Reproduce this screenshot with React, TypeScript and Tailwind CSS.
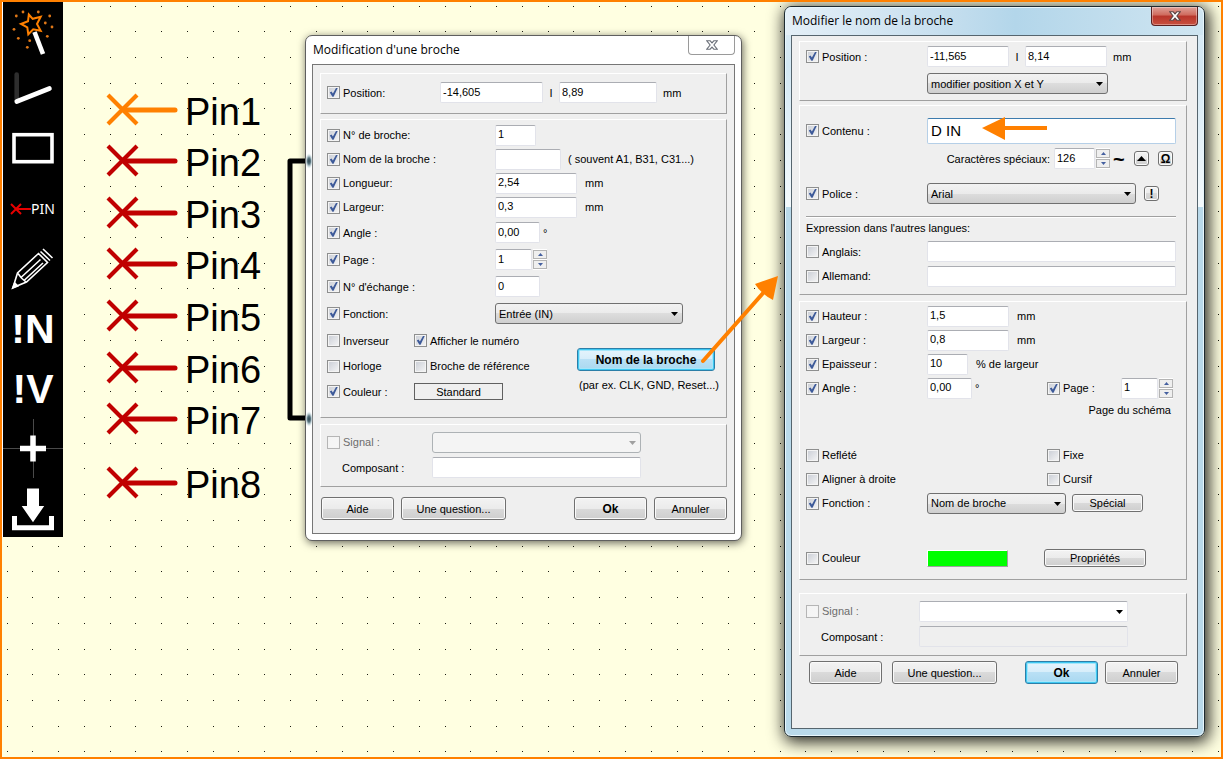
import type { ReactNode } from "react";
import clsx from "clsx";

const GRID_STEP_X = 25.77;
const GRID_STEP_Y = 25.72;
const GRID_COLS = 100;
const GRID_ROWS = 60;

interface Pin {
  name: string;
  y: number;
  selected?: boolean;
}

const PINS: Pin[] = [
  { name: "Pin1", y: 110, selected: true },
  { name: "Pin2", y: 161 },
  { name: "Pin3", y: 213 },
  { name: "Pin4", y: 264 },
  { name: "Pin5", y: 316 },
  { name: "Pin6", y: 368 },
  { name: "Pin7", y: 419 },
  { name: "Pin8", y: 483 },
];

const gridPath = () => {
  let d = "";
  for (let row = 0; row < GRID_ROWS; row++) {
    for (let col = 0; col < GRID_COLS; col++) {
      const x = Math.floor(7 + col * GRID_STEP_X);
      const y = Math.floor(6 + row * GRID_STEP_Y);
      d += `M${x} ${y}h1v1h-1z`;
    }
  }
  return d;
};

/* ---------- Controls ---------- */

interface CheckProps {
  label: string;
  checked?: boolean;
  disabled?: boolean;
  className?: string;
}

function Check({ label, checked = false, disabled = false, className }: CheckProps) {
  return (
    <label
      className={clsx(
        "flex shrink-0 items-center gap-[3px] whitespace-nowrap",
        disabled ? "text-[#6d6d6d]" : "text-black",
        className
      )}
    >
      <span className="relative size-[13px] shrink-0">
        <input
          type="checkbox"
          defaultChecked={checked}
          disabled={disabled}
          className="peer block size-[13px] appearance-none border border-[#8e8f8f] bg-linear-to-br from-[#c9cdd5] to-[#f6f6f6] shadow-[inset_0_0_0_1px_#f4f4f4] disabled:border-[#b5b5b5] disabled:from-[#f4f4f4]"
        />
        <svg
          viewBox="0 0 13 13"
          className="pointer-events-none invisible absolute inset-0 size-[13px] peer-checked:visible"
        >
          <path d="M2.8 6.4l1.7-1 1.4 2L9 2h1.7L6.6 10.8H5.4z" fill="#3d5a99" />
        </svg>
      </span>
      {label}
    </label>
  );
}

interface FieldProps {
  label: string;
  value?: string;
  disabled?: boolean;
  className?: string;
}

function Field({ label, value = "", disabled = false, className }: FieldProps) {
  return (
    <input
      type="text"
      aria-label={label}
      defaultValue={value}
      disabled={disabled}
      className={clsx(
        "h-[21px] shrink-0 rounded-[2px] border border-[#e2e3ea] border-t-[#abadb3] px-[2px] pb-[2px] text-[11px] text-black outline-none",
        disabled ? "bg-[#efefef]" : "bg-white",
        className
      )}
    />
  );
}

interface DropDownProps extends FieldProps {
  flat?: boolean;
}

function DropDown({ label, value = "", disabled = false, flat = false, className }: DropDownProps) {
  return (
    <span className={clsx("relative h-[21px] shrink-0", className)}>
      <select
        aria-label={label}
        defaultValue={value}
        disabled={disabled}
        className={clsx(
          "block h-full w-full appearance-none border pl-[3px] text-[11px] text-black",
          flat && "rounded-[2px] border-[#e2e3ea] border-t-[#abadb3] bg-white",
          !flat && disabled && "rounded-[3px] border-[#adb2b5] bg-[#f4f4f4]",
          !flat &&
            !disabled &&
            "rounded-[3px] border-[#707070] bg-[linear-gradient(#f2f2f2,#ebebeb_50%,#dddddd_50%,#cfcfcf)]"
        )}
      >
        <option>{value}</option>
      </select>
      <svg
        viewBox="0 0 7 4"
        className={clsx(
          "pointer-events-none absolute top-[9px] right-[5px] h-[4px] w-[7px]",
          disabled ? "fill-[#a0a0a0]" : "fill-black"
        )}
      >
        <path d="M0 0h7L3.5 4z" />
      </svg>
    </span>
  );
}

function Spinner({ label }: { label: string }) {
  return (
    <span className="ml-px flex h-[21px] w-[14px] shrink-0 flex-col gap-px bg-white py-px">
      <button
        aria-label={`${label} +`}
        className="flex flex-1 items-center justify-center border border-[#b4b4b4] bg-[#efefef]"
      >
        <svg viewBox="0 0 5 3" className="h-[3px] w-[5px] fill-[#4560a0]">
          <path d="M0 3h5L2.5 0z" />
        </svg>
      </button>
      <button
        aria-label={`${label} -`}
        className="flex flex-1 items-center justify-center border border-[#b4b4b4] bg-[#efefef]"
      >
        <svg viewBox="0 0 5 3" className="h-[3px] w-[5px] fill-[#4560a0]">
          <path d="M0 0h5L2.5 3z" />
        </svg>
      </button>
    </span>
  );
}

interface PushButtonProps {
  children: ReactNode;
  active?: boolean;
  className?: string;
}

function PushButton({ children, active = false, className }: PushButtonProps) {
  return (
    <button
      className={clsx(
        "flex shrink-0 items-center justify-center rounded-[3px] border whitespace-nowrap text-black",
        active
          ? "border-[#2c7fa8] bg-[linear-gradient(#e6f4fc,#d6edfa_50%,#b9e0f5_50%,#a9d8f0)] shadow-[inset_0_0_0_1px_#3fc8f2,inset_0_0_0_2px_#a5e6fa]"
          : "border-[#707070] bg-[linear-gradient(#f3f3f3,#ebebeb_50%,#dadada_50%,#cecece)] shadow-[inset_0_0_0_1px_#fafafa]",
        className
      )}
    >
      {children}
    </button>
  );
}

function Group({ children, className }: { children: ReactNode; className?: string }) {
  return (
    <fieldset
      className={clsx(
        "border border-t-white border-r-[#a0a0a0] border-b-[#a0a0a0] border-l-white pl-[6px]",
        className
      )}
    >
      {children}
    </fieldset>
  );
}

function Row({ children, tall = false, className }: { children: ReactNode; tall?: boolean; className?: string }) {
  return (
    <div className={clsx("flex items-center whitespace-nowrap", tall ? "h-[27px]" : "h-[24px]", className)}>
      {children}
    </div>
  );
}

function CloseGlyph({ className }: { className?: string }) {
  return (
    <svg viewBox="0 0 12 10" className={clsx("h-[10px] w-[12px]", className)}>
      <path
        d="M.8.8h3.4L6 2.9 7.8.8h3.4L7.9 5l3.3 4.2H7.8L6 7.100 4.2 9.2H.8L4.1 5z"
        strokeWidth="1.1"
      />
    </svg>
  );
}

/* ---------- Toolbar ---------- */

const SPARKS = [
  [13.3, 14], [20, 10], [35.3, 10], [46.7, 14], [42.3, 21], [49, 25],
  [11, 27.3], [15.3, 36.3], [26.7, 38.7], [44.3, 34.3], [24.3, 45.3],
];

function Toolbar() {
  return (
    <nav
      aria-label="Outils"
      className="absolute top-[2px] left-[2px] flex w-[61px] flex-col border-l border-white bg-black text-white"
    >
      <button aria-label="Assistant" className="h-[57px]">
        <svg viewBox="0 0 60 57" className="h-[57px] w-[60px]">
          <path d="M31.5 30L40 52" stroke="#fff" strokeWidth="4.6" />
          <path
            d="M25.8 12.5l3.9 4.3 8-2-3.7 7.2 3.7 6.8-7.5-1.5-4.9 5-1-7-6.3-3.3 7-2.7z"
            fill="#000"
            stroke="#ff8000"
            strokeWidth="2"
          />
          {SPARKS.map(([cx, cy]) => (
            <circle key={`${cx}-${cy}`} cx={cx} cy={cy} r="1.4" fill="#e07818" />
          ))}
        </svg>
      </button>
      <button aria-label="Ligne" className="h-[60px]">
        <svg viewBox="0 0 60 60" className="size-[60px]" strokeWidth="4.6" strokeLinecap="round">
          <path d="M13.7 15.5V40" stroke="#2e2e2e" />
          <path d="M13.7 42.5L46.5 29.5" stroke="#fff" />
        </svg>
      </button>
      <button aria-label="Rectangle" className="h-[60px]">
        <svg viewBox="0 0 60 60" className="size-[60px]">
          <rect x="11" y="15.7" width="38" height="27" fill="none" stroke="#fff" strokeWidth="3.6" />
        </svg>
      </button>
      <button className="flex h-[60px] items-center pl-[7px] font-['Noto_Sans',sans-serif] text-[14px]">
        <svg viewBox="0 0 21 12" className="h-[12px] w-[21px]" stroke="#e60000" strokeWidth="2">
          <path d="M1 1l10 10M1 11L11 1M6 6h15" />
        </svg>
        PIN
      </button>
      <button aria-label="Dessin" className="h-[60px]">
        <svg viewBox="0 0 60 60" className="size-[60px]" fill="none" stroke="#fff" strokeWidth="1.6">
          <path d="M10 48.500L14.500 34 35.500 14.500 44.500 23.500 23.500 43z" />
          <path d="M18 38.500L37.500 20.500M15 34.500l3 4 1 1 4 3.500M21 41.500L40 24M37.500 12.500L47 21.500M40 10l9.500 9" />
          <path d="M9.700 49l2-5 3 3z" fill="#fff" />
        </svg>
      </button>
      <button className="h-[60px] font-['Liberation_Sans',sans-serif] text-[41px] leading-[60px] font-bold">!N</button>
      <button className="h-[60px] font-['Liberation_Sans',sans-serif] text-[41px] leading-[60px] font-bold">!V</button>
      <button aria-label="Origine" className="h-[60px]">
        <svg viewBox="0 0 60 60" className="size-[60px]">
          <path d="M0 29.5h60M30.5 0v59" stroke="#4a4a4a" />
          <path d="M17 29.5h26M30 16.5v26" stroke="#fff" strokeWidth="5.5" />
        </svg>
      </button>
      <button aria-label="Importer" className="h-[58px]">
        <svg viewBox="0 0 60 58" className="h-[58px] w-[60px]" fill="#fff">
          <path d="M24 9.5h12V27h5.2L30 43.3 18.7 27H24z" />
          <path d="M9 37h5v9.2h32V37h5v14.3H9z" />
        </svg>
      </button>
    </nav>
  );
}

/* ---------- Schematic ---------- */

function Schematic() {
  return (
    <svg className="absolute inset-0 h-full w-full" aria-label="Schéma">
      <path d={gridPath()} fill="#1a1a10" shapeRendering="crispEdges" />
      {PINS.map((pin) => (
        <g key={pin.name} transform={`translate(123 ${pin.y})`}>
          <path
            d="M-15-15L14 14M-15 14L14-15"
            stroke={pin.selected ? "#ff8000" : "#c00000"}
            strokeWidth="4.2"
          />
          <path
            d="M2 0h50"
            stroke={pin.selected ? "#ff8000" : "#c00000"}
            strokeWidth="5"
            strokeLinecap="round"
          />
          <text x="62" y="15" className="fill-black font-['Liberation_Sans',sans-serif] text-[38px]">
            {pin.name}
          </text>
        </g>
      ))}
      <path d="M310 161H290V418H310" fill="none" stroke="#000" strokeWidth="5" strokeLinejoin="round" />
    </svg>
  );
}

/* Orange arrows and the wire ends seen through the window frame */
function Annotations() {
  return (
    <svg className="pointer-events-none absolute inset-0 h-full w-full">
      <defs>
        <radialGradient id="wireEnd">
          <stop offset="0" stopColor="#2e444e" />
          <stop offset="0.4" stopColor="#5d7883" />
          <stop offset="1" stopColor="#d8f0f5" stopOpacity="0" />
        </radialGradient>
      </defs>
      <ellipse cx="309" cy="161" rx="4" ry="8" fill="url(#wireEnd)" />
      <ellipse cx="309" cy="419" rx="4" ry="8" fill="url(#wireEnd)" />
      <path d="M703 361L764 292" stroke="#ff8000" strokeWidth="4" strokeLinecap="round" />
      <path d="M778 276L755 284q6 10 18 16z" fill="#ff8000" />
      <path d="M1004 128h43" stroke="#ff8000" strokeWidth="4" />
      <path d="M982 128l23-11v23z" fill="#ff8000" />
    </svg>
  );
}

/* ---------- Dialogs ---------- */

function SignalGroup({ flat = false, className, labelClass }: { flat?: boolean; className: string; labelClass: string }) {
  return (
    <Group className={clsx("py-[5px]", className)}>
      <Row>
        <Check label="Signal :" disabled className={labelClass} />
        <DropDown label="Signal" disabled={!flat} flat={flat} className="w-[209px]" />
      </Row>
      <Row tall>
        <span className={clsx("shrink-0 pl-[15px]", labelClass)}>Composant :</span>
        <Field label="Composant" disabled={flat} className="w-[209px]" />
      </Row>
    </Group>
  );
}

function PinDialog() {
  return (
    <section
      role="dialog"
      aria-labelledby="pin-title"
      className="absolute top-[35px] left-[305px] w-[437px] rounded-[7px] border border-[#5f5f5f] bg-white px-[6px] pb-[6px] shadow-[1px_2px_8px_rgba(0,0,0,0.6)]"
    >
      <header className="flex h-[28px] items-start justify-between">
        <h2 id="pin-title" className="pl-px font-['Open_Sans',sans-serif] text-[12px] leading-[28px] text-black">
          Modification d'une broche
        </h2>
        <button
          aria-label="Fermer"
          className="flex h-[19px] w-[47px] items-center justify-center rounded-b-[4px] border border-t-0 border-[#9a9a9a]"
        >
          <CloseGlyph className="fill-white stroke-[#6a6f78]" />
        </button>
      </header>
      <div className="border border-[#767676] bg-[#efefef] pt-[8px] pr-[7px] pb-[13px] pl-[7px]">
        <Group className="pt-[5px] pb-[7px]">
          <Row tall>
            <Check label="Position:" checked className="w-[113px]" />
            <Field label="Position X" value="-14,605" className="w-[103px]" />
            <span className="w-[16px] text-center">I</span>
            <Field label="Position Y" value="8,89" className="w-[98px]" />
            <span className="pl-[6px]">mm</span>
          </Row>
        </Group>

        <Group className="mt-[5px] pt-[3px] pb-[12px]">
          <Row>
            <Check label="N° de broche:" checked className="w-[168px]" />
            <Field label="N° de broche" value="1" className="w-[41px]" />
          </Row>
          <Row>
            <Check label="Nom de la broche :" checked className="w-[168px]" />
            <Field label="Nom de la broche" className="w-[66px]" />
            <span className="pl-[7px]">( souvent A1, B31, C31...)</span>
          </Row>
          <Row>
            <Check label="Longueur:" checked className="w-[168px]" />
            <Field label="Longueur" value="2,54" className="w-[82px]" />
            <span className="pl-[8px]">mm</span>
          </Row>
          <Row>
            <Check label="Largeur:" checked className="w-[168px]" />
            <Field label="Largeur" value="0,3" className="w-[82px]" />
            <span className="pl-[8px]">mm</span>
          </Row>
          <Row tall>
            <Check label="Angle :" checked className="w-[168px]" />
            <Field label="Angle" value="0,00" className="w-[45px]" />
            <span className="pl-[3px]">°</span>
          </Row>
          <Row tall>
            <Check label="Page :" checked className="w-[168px]" />
            <Field label="Page" value="1" className="w-[37px]" />
            <Spinner label="Page" />
          </Row>
          <Row tall>
            <Check label="N° d'échange :" checked className="w-[168px]" />
            <Field label="N° d'échange" value="0" className="w-[45px]" />
          </Row>
          <Row tall>
            <Check label="Fonction:" checked className="w-[168px]" />
            <DropDown label="Fonction" value="Entrée (IN)" className="w-[188px]" />
          </Row>
          <div className="flex justify-between">
            <div>
              <Row tall>
                <Check label="Inverseur" className="w-[87px]" />
                <Check label="Afficher le numéro" checked />
              </Row>
              <Row>
                <Check label="Horloge" className="w-[87px]" />
                <Check label="Broche de référence" />
              </Row>
              <Row tall>
                <Check label="Couleur :" checked className="w-[87px]" />
                <button className="h-[17px] w-[89px] border border-[#606060]">Standard</button>
              </Row>
            </div>
            <div className="flex flex-col items-end pt-[21px] pr-[7px]">
              <PushButton active className="mr-[4px] h-[23px] w-[138px] text-[12px] font-bold">
                Nom de la broche
              </PushButton>
              <span className="leading-[28px]">(par ex. CLK, GND, Reset...)</span>
            </div>
          </div>
        </Group>

        <SignalGroup className="mt-[6px]" labelClass="w-[105px]" />

        <footer className="mt-[10px] flex gap-[7px] pl-px">
          <PushButton className="h-[23px] w-[73px]">Aide</PushButton>
          <PushButton className="h-[23px] w-[105px]">Une question...</PushButton>
          <PushButton className="ml-auto h-[23px] w-[73px] text-[12px] font-bold">Ok</PushButton>
          <PushButton className="h-[23px] w-[73px]">Annuler</PushButton>
        </footer>
      </div>
    </section>
  );
}

function PinNameDialog() {
  return (
    <section
      role="dialog"
      aria-labelledby="name-title"
      className="absolute top-[6px] left-[784px] w-[421px] rounded-[7px] border border-[#1e2a30] bg-[linear-gradient(#dcebf5,#d3e8f4_60px,#f4fafd_200px,#b9d9ea_200px)] px-[6px] pb-[7px] shadow-[2px_3px_16px_2px_rgba(0,0,0,0.85),inset_0_0_0_1px_#e8f6fc]"
    >
      <header className="-mx-[5px] flex h-[28px] items-start justify-between rounded-t-[6px] bg-[linear-gradient(90deg,#e4eff7,#c9e0ef_35%,#b3d6ea_55%,#cfe5f1)] px-[5px] shadow-[inset_0_1px_0_#e8f6fc]">
        <h2 id="name-title" className="pl-px font-['Open_Sans',sans-serif] text-[12px] leading-[28px] text-black">
          Modifier le nom de la broche
        </h2>
        <button
          aria-label="Fermer"
          className="flex h-[19px] w-[47px] items-center justify-center rounded-b-[4px] border border-t-0 border-[#5a2020] bg-[linear-gradient(#dfa198,#cf6a5c_45%,#b8352a_50%,#c8503f)] shadow-[inset_0_0_0_1px_rgba(255,255,255,0.35)]"
        >
          <CloseGlyph className="fill-white stroke-[#5b4444]" />
        </button>
      </header>
      <div className="border border-[#56656e] bg-[#efefef] pt-[5px] pr-[10px] pb-[44px] pl-[7px]">
        <Group className="pt-px pb-[3px]">
          <Row tall>
            <Check label="Position :" checked className="w-[121px]" />
            <Field label="Position X" value="-11,565" className="w-[82px]" />
            <span className="w-[16px] text-center">I</span>
            <Field label="Position Y" value="8,14" className="w-[82px]" />
            <span className="pl-[6px]">mm</span>
          </Row>
          <Row tall>
            <DropDown label="Mode de position" value="modifier position X et Y" className="ml-[121px] w-[181px]" />
          </Row>
        </Group>

        <Group className="mt-[4px] pt-[11px] pr-[10px] pb-[6px]">
          <Row tall>
            <Check label="Contenu :" checked className="w-[121px]" />
            <input
              type="text"
              aria-label="Contenu"
              defaultValue="D IN"
              className="h-[26px] min-w-0 flex-1 rounded-[2px] border border-[#b5cfe7] border-t-[#3d7bad] bg-white px-[3px] text-[15px] text-black outline-none"
            />
          </Row>
          <Row tall className="mt-px justify-end pr-[3px]">
            <label htmlFor="special-char" className="pr-[4px]">
              Caractères spéciaux:
            </label>
            <input
              id="special-char"
              type="text"
              defaultValue="126"
              className="h-[21px] w-[41px] rounded-[2px] border border-[#e2e3ea] border-t-[#abadb3] bg-white px-[2px] pb-[2px] text-[11px] text-black"
            />
            <Spinner label="Caractère" />
            <span className="w-[24px] pl-[3px] text-[20px] leading-[20px] font-bold">~</span>
            <PushButton className="size-[15px]">
              <svg viewBox="0 0 9 5" className="h-[5px] w-[9px]">
                <path d="M0 5h9L4.5 0z" />
              </svg>
            </PushButton>
            <PushButton className="ml-[9px] size-[15px] text-[12px] font-bold">Ω</PushButton>
          </Row>
          <Row tall className="mt-[8px]">
            <Check label="Police :" checked className="w-[121px]" />
            <DropDown label="Police" value="Arial" className="w-[209px]" />
            <PushButton className="ml-[8px] size-[15px] text-[12px] font-bold">!</PushButton>
          </Row>
          <hr className="mt-[9px] h-[2px] border-t border-b border-t-[#a0a0a0] border-b-white" />
          <p className="leading-[20px]">Expression dans l'autres langues:</p>
          <Row tall>
            <Check label="Anglais:" className="w-[121px]" />
            <Field label="Anglais" className="w-[249px]" />
          </Row>
          <Row className="-mt-px">
            <Check label="Allemand:" className="w-[121px]" />
            <Field label="Allemand" className="w-[249px]" />
          </Row>
        </Group>

        <Group className="mt-[6px] pt-[2px] pb-[9px]">
          <Row>
            <Check label="Hauteur :" checked className="w-[121px]" />
            <Field label="Hauteur" value="1,5" className="w-[82px]" />
            <span className="pl-[8px]">mm</span>
          </Row>
          <Row>
            <Check label="Largeur :" checked className="w-[121px]" />
            <Field label="Largeur" value="0,8" className="w-[82px]" />
            <span className="pl-[8px]">mm</span>
          </Row>
          <Row>
            <Check label="Epaisseur :" checked className="w-[121px]" />
            <Field label="Epaisseur" value="10" className="w-[41px]" />
            <span className="pl-[8px]">% de largeur</span>
          </Row>
          <Row>
            <Check label="Angle :" checked className="w-[121px]" />
            <Field label="Angle" value="0,00" className="w-[45px]" />
            <span className="w-[75px] pl-[3px]">°</span>
            <Check label="Page :" checked className="w-[74px]" />
            <Field label="Page" value="1" className="w-[37px]" />
            <Spinner label="Page" />
          </Row>
          <p className="pr-[15px] text-right leading-[20px]">Page du schéma</p>
          <Row className="mt-[23px]">
            <Check label="Reflété" className="w-[241px]" />
            <Check label="Fixe" />
          </Row>
          <Row>
            <Check label="Aligner à droite" className="w-[241px]" />
            <Check label="Cursif" />
          </Row>
          <Row>
            <Check label="Fonction :" checked className="w-[121px]" />
            <DropDown label="Fonction" value="Nom de broche" className="w-[139px]" />
            <PushButton className="ml-[6px] h-[18px] w-[71px]">Spécial</PushButton>
          </Row>
          <Row className="mt-[31px]">
            <Check label="Couleur" className="w-[121px]" />
            <button
              aria-label="Choisir la couleur"
              className="h-[17px] w-[81px] border border-t-white border-r-[#a0a0a0] border-b-[#a0a0a0] border-l-white bg-[#00ff00]"
            />
            <PushButton className="ml-[36px] h-[18px] w-[102px]">Propriétés</PushButton>
          </Row>
        </Group>

        <SignalGroup flat className="mt-[13px]" labelClass="w-[113px]" />

        <footer className="mt-[5px] flex gap-[7px] pr-[9px] pl-[10px]">
          <PushButton className="h-[23px] w-[73px]">Aide</PushButton>
          <PushButton className="ml-[3px] h-[23px] w-[105px]">Une question...</PushButton>
          <PushButton active className="ml-auto h-[23px] w-[73px] text-[12px] font-bold">
            Ok
          </PushButton>
          <PushButton className="h-[23px] w-[73px]">Annuler</PushButton>
        </footer>
      </div>
    </section>
  );
}

export default function App() {
  return (
    <main className="relative min-h-screen overflow-hidden bg-[#ffffe1] font-['Liberation_Sans',Arial,sans-serif] text-[11px] leading-[14px] text-black">
      <Schematic />
      <Toolbar />
      <PinDialog />
      <PinNameDialog />
      <Annotations />
      <div className="pointer-events-none absolute inset-0 border-2 border-[#ff8000]" />
    </main>
  );
}
